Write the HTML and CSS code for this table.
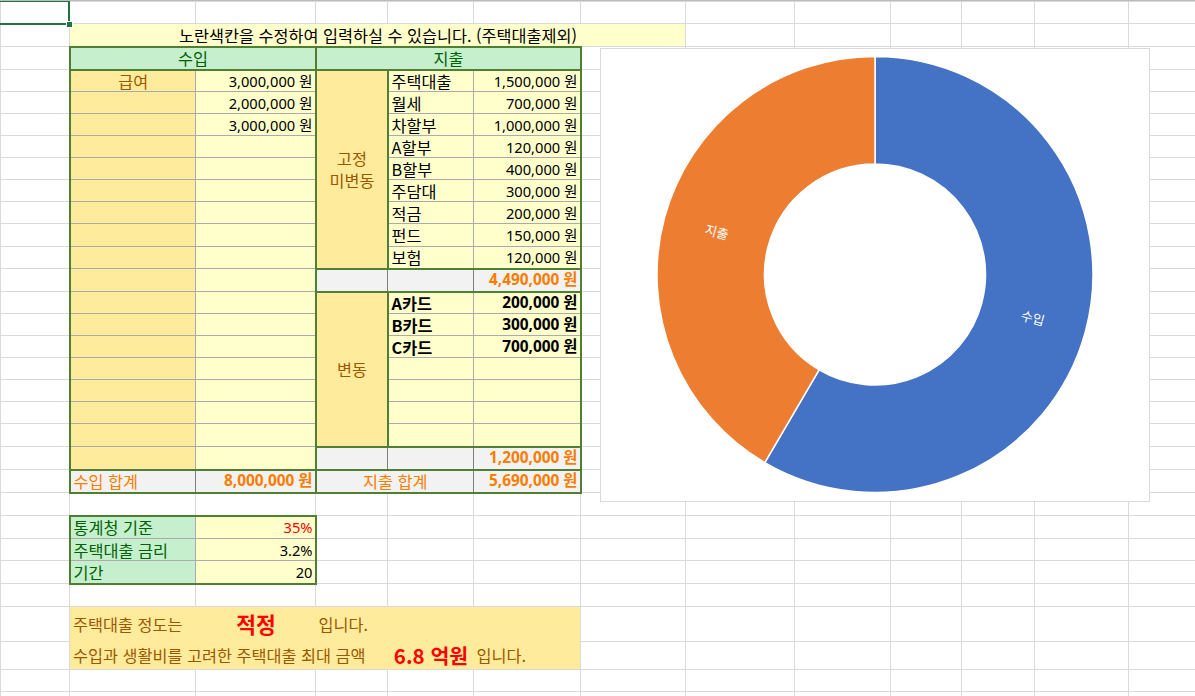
FILE: index.html
```html
<!DOCTYPE html>
<html lang="ko">
<head>
<meta charset="utf-8">
<title>주택대출 계산</title>
<link rel="stylesheet" href="styles.css">
</head>
<body>
<div class="sheet">
<table class="grid">
<colgroup>
<col class="cA"><col class="cB"><col class="cC"><col class="cD"><col class="cE"><col class="cF"><col class="cG"><col class="cH"><col class="cI"><col class="cJ"><col class="cK"><col class="cL"><col class="cM">
</colgroup>
<tbody>
<tr class="h22"><td></td><td></td><td></td><td></td><td></td><td></td><td></td><td></td><td></td><td></td><td></td><td></td><td></td></tr>
<tr class="h23"><td></td><td colspan="6" class="note">노란색칸을 수정하여 입력하실 수 있습니다. (주택대출제외)</td><td></td><td></td><td></td><td></td><td></td><td></td></tr>
<tr class="h23"><td></td><td colspan="2" class="hdr gl gt gr gb">수입</td><td colspan="3" class="hdr gl gt gr gb">지출</td><td></td><td></td><td></td><td></td><td></td><td></td><td></td></tr>
<tr class="h22"><td></td><td class="gold in gl c">급여</td><td class="inp in gr r n">3,000,000 원</td><td rowspan="9" class="gold gl gr c vc">고정<br>미변동</td><td class="inp in">주택대출</td><td class="inp in gr r n">1,500,000 원</td><td></td><td></td><td></td><td></td><td></td><td></td><td></td></tr>
<tr class="h22"><td></td><td class="gold in gl"></td><td class="inp in gr r n">2,000,000 원</td><td class="inp in">월세</td><td class="inp in gr r n">700,000 원</td><td></td><td></td><td></td><td></td><td></td><td></td><td></td></tr>
<tr class="h22"><td></td><td class="gold in gl"></td><td class="inp in gr r n">3,000,000 원</td><td class="inp in">차할부</td><td class="inp in gr r n">1,000,000 원</td><td></td><td></td><td></td><td></td><td></td><td></td><td></td></tr>
<tr class="h22"><td></td><td class="gold in gl"></td><td class="inp in gr r"></td><td class="inp in">A할부</td><td class="inp in gr r n">120,000 원</td><td></td><td></td><td></td><td></td><td></td><td></td><td></td></tr>
<tr class="h22"><td></td><td class="gold in gl"></td><td class="inp in gr r"></td><td class="inp in">B할부</td><td class="inp in gr r n">400,000 원</td><td></td><td></td><td></td><td></td><td></td><td></td><td></td></tr>
<tr class="h22"><td></td><td class="gold in gl"></td><td class="inp in gr r"></td><td class="inp in">주담대</td><td class="inp in gr r n">300,000 원</td><td></td><td></td><td></td><td></td><td></td><td></td><td></td></tr>
<tr class="h22"><td></td><td class="gold in gl"></td><td class="inp in gr r"></td><td class="inp in">적금</td><td class="inp in gr r n">200,000 원</td><td></td><td></td><td></td><td></td><td></td><td></td><td></td></tr>
<tr class="h23"><td></td><td class="gold in gl"></td><td class="inp in gr r"></td><td class="inp in">펀드</td><td class="inp in gr r n">150,000 원</td><td></td><td></td><td></td><td></td><td></td><td></td><td></td></tr>
<tr class="h22"><td></td><td class="gold in gl"></td><td class="inp in gr r"></td><td class="inp in">보험</td><td class="inp in gr r n">120,000 원</td><td></td><td></td><td></td><td></td><td></td><td></td><td></td></tr>
<tr class="h23"><td></td><td class="gold in gl"></td><td class="inp in gr r"></td><td class="calc gl gt gb"></td><td class="calc gt gb"></td><td class="calc gt gb gr r b n">4,490,000 원</td><td></td><td></td><td></td><td></td><td></td><td></td><td></td></tr>
<tr class="h22"><td></td><td class="gold in gl"></td><td class="inp in gr r"></td><td rowspan="7" class="gold gl gr c vc">변동</td><td class="inp in b">A카드</td><td class="inp in gr r b n">200,000 원</td><td></td><td></td><td></td><td></td><td></td><td></td><td></td></tr>
<tr class="h22"><td></td><td class="gold in gl"></td><td class="inp in gr r"></td><td class="inp in b">B카드</td><td class="inp in gr r b n">300,000 원</td><td></td><td></td><td></td><td></td><td></td><td></td><td></td></tr>
<tr class="h22"><td></td><td class="gold in gl"></td><td class="inp in gr r"></td><td class="inp in b">C카드</td><td class="inp in gr r b n">700,000 원</td><td></td><td></td><td></td><td></td><td></td><td></td><td></td></tr>
<tr class="h22"><td></td><td class="gold in gl"></td><td class="inp in gr r"></td><td class="inp in"></td><td class="inp in gr r"></td><td></td><td></td><td></td><td></td><td></td><td></td><td></td></tr>
<tr class="h22"><td></td><td class="gold in gl"></td><td class="inp in gr r"></td><td class="inp in"></td><td class="inp in gr r"></td><td></td><td></td><td></td><td></td><td></td><td></td><td></td></tr>
<tr class="h22"><td></td><td class="gold in gl"></td><td class="inp in gr r"></td><td class="inp in"></td><td class="inp in gr r"></td><td></td><td></td><td></td><td></td><td></td><td></td><td></td></tr>
<tr class="h23"><td></td><td class="gold in gl"></td><td class="inp in gr r"></td><td class="inp in"></td><td class="inp in gr r"></td><td></td><td></td><td></td><td></td><td></td><td></td><td></td></tr>
<tr class="h23"><td></td><td class="gold in gl"></td><td class="inp in gr r"></td><td class="calc gl gt"></td><td class="calc gt"></td><td class="calc gt gr r b n">1,200,000 원</td><td></td><td></td><td></td><td></td><td></td><td></td><td></td></tr>
<tr class="h23"><td></td><td class="calc gl gt gb">수입 합계</td><td class="calc gt gb gr r b n">8,000,000 원</td><td colspan="2" class="calc gl gt gb c">지출 합계</td><td class="calc gt gb gr r b n">5,690,000 원</td><td></td><td></td><td></td><td></td><td></td><td></td><td></td></tr>
<tr class="h23"><td></td><td></td><td></td><td></td><td></td><td></td><td></td><td></td><td></td><td></td><td></td><td></td><td></td></tr>
<tr class="h23"><td></td><td class="lbl in gl gt">통계청 기준</td><td class="inp in gt gr r red n">35%</td><td></td><td></td><td></td><td></td><td></td><td></td><td></td><td></td><td></td><td></td></tr>
<tr class="h22"><td></td><td class="lbl in gl">주택대출 금리</td><td class="inp in gr r n">3.2%</td><td></td><td></td><td></td><td></td><td></td><td></td><td></td><td></td><td></td><td></td></tr>
<tr class="h23"><td></td><td class="lbl in gl gb">기간</td><td class="inp in gr gb r n">20</td><td></td><td></td><td></td><td></td><td></td><td></td><td></td><td></td><td></td><td></td></tr>
<tr class="h23"><td></td><td></td><td></td><td></td><td></td><td></td><td></td><td></td><td></td><td></td><td></td><td></td><td></td></tr>
<tr class="h35"><td></td><td class="nb">주택대출 정도는</td><td class="nb c big">적정</td><td class="nb">입니다.</td><td class="nb"></td><td class="nb"></td><td></td><td></td><td></td><td></td><td></td><td></td><td></td></tr>
<tr class="h28"><td></td><td colspan="3" class="nb">수입과 생활비를 고려한 주택대출 최대 금액</td><td class="nb c big2">6.8 억원</td><td class="nb">입니다.</td><td></td><td></td><td></td><td></td><td></td><td></td><td></td></tr>
<tr class="h22"><td></td><td></td><td></td><td></td><td></td><td></td><td></td><td></td><td></td><td></td><td></td><td></td><td></td></tr>
<tr class="h22"><td></td><td></td><td></td><td></td><td></td><td></td><td></td><td></td><td></td><td></td><td></td><td></td><td></td></tr>
</tbody>
</table>

<div class="selection"><div class="handle"></div></div>

<div class="chart">
<svg class="donut" width="548" height="452" viewBox="0 1 548 452">
<path class="slice-in" d="M 274 8.5 A 218 218 0 1 1 163.8 414.6 L 218.1 321.8 A 110.5 110.5 0 1 0 274 116 Z"/>
<path class="slice-out" d="M 163.8 414.6 A 218 218 0 0 1 274 8.5 L 274 116 A 110.5 110.5 0 0 0 218.1 321.8 Z"/>
<text class="lab" x="0" y="0" transform="translate(432 269.5) rotate(15.2)">수입</text>
<text class="lab" x="0" y="0" transform="translate(116 183.5) rotate(15.2)">지출</text>
</svg>
</div>
</div>
</body>
</html>
```
FILE: styles.css
```css
html, body {
  margin: 0;
  padding: 0;
  background: #ffffff;
  overflow: hidden;
}

.sheet {
  position: relative;
  width: 1195px;
  height: 696px;
  overflow: hidden;
  border-top: 1px solid #bcbcbc;
  box-sizing: border-box;
}

.grid {
  border-collapse: collapse;
  table-layout: fixed;
  width: 1228px;
  font-family: "Noto Sans CJK KR", sans-serif;
  font-size: 16.3px;
  color: #000000;
}

.cA { width: 69px; }
.cB { width: 126px; }
.cC { width: 120px; }
.cD { width: 72px; }
.cE { width: 86px; }
.cF { width: 107px; }
.cG { width: 105px; }
.cH { width: 109px; }
.cI { width: 96px; }
.cJ { width: 71px; }
.cK { width: 73px; }
.cL { width: 94px; }
.cM { width: 100px; }

.h22 { height: 22px; }
.h23 { height: 23px; }
.h28 { height: 28px; }
.h35 { height: 35px; }

.grid td {
  border: 1px solid #dadada;
  padding: 0 2px 0 3px;
  white-space: nowrap;
  overflow: hidden;
  line-height: 20px;
  vertical-align: middle;
}

.r { text-align: right; }
.c { text-align: center; }
.b { font-weight: 700; }
.red { color: #ff0000; }

.grid td.n {
  font-family: "Noto Sans", "Noto Sans CJK KR", sans-serif;
  font-size: 14.67px;
}

.grid td.n.b {
  font-size: 15.4px;
}

.note {
  background: #ffffcc;
  text-align: center;
}

.hdr {
  background: #c6efce;
  color: #006100;
  text-align: center;
}

.lbl {
  background: #c6efce;
  color: #006100;
}

.gold {
  background: #ffeb9c;
  color: #9c5700;
}

.grid td.vc {
  line-height: 22px;
  white-space: normal;
}

.inp {
  background: #ffffcc;
}

.grid td.in { border-color: #ababab; }

.grid td.calc {
  background: #f2f2f2;
  color: #fa7d00;
  border-color: #7f7f7f;
}

.grid td.gl { border-left: 2px solid #507e32; }
.grid td.gr { border-right: 2px solid #507e32; }
.grid td.gt { border-top: 2px solid #507e32; }
.grid td.gb { border-bottom: 2px solid #507e32; }

.grid td.nb {
  background: #ffeb9c;
  color: #9c5700;
  border-style: none;
}

.grid td.big {
  color: #ff0000;
  font-weight: 700;
  font-size: 21.5px;
}

.grid td.big2 {
  color: #ff0000;
  font-weight: 700;
  font-size: 20.5px;
}

.selection {
  position: absolute;
  left: -2px;
  top: -1px;
  width: 72px;
  height: 25px;
  border: 2px solid #217346;
  box-sizing: border-box;
}

.handle {
  position: absolute;
  right: -5px;
  bottom: -5px;
  width: 5px;
  height: 5px;
  background: #217346;
  border: 1px solid #ffffff;
}

.chart {
  position: absolute;
  left: 600px;
  top: 47px;
  width: 550px;
  height: 454px;
  border: 1px solid #d9d9d9;
  box-sizing: border-box;
  background: #ffffff;
}

.donut {
  display: block;
}

.slice-in {
  fill: #4472c4;
  stroke: #ffffff;
  stroke-width: 1.5;
}

.slice-out {
  fill: #ed7d31;
  stroke: #ffffff;
  stroke-width: 1.5;
}

.lab {
  fill: #ffffff;
  font-family: "Noto Sans CJK KR", sans-serif;
  font-size: 13px;
  text-anchor: middle;
  dominant-baseline: central;
}
```
